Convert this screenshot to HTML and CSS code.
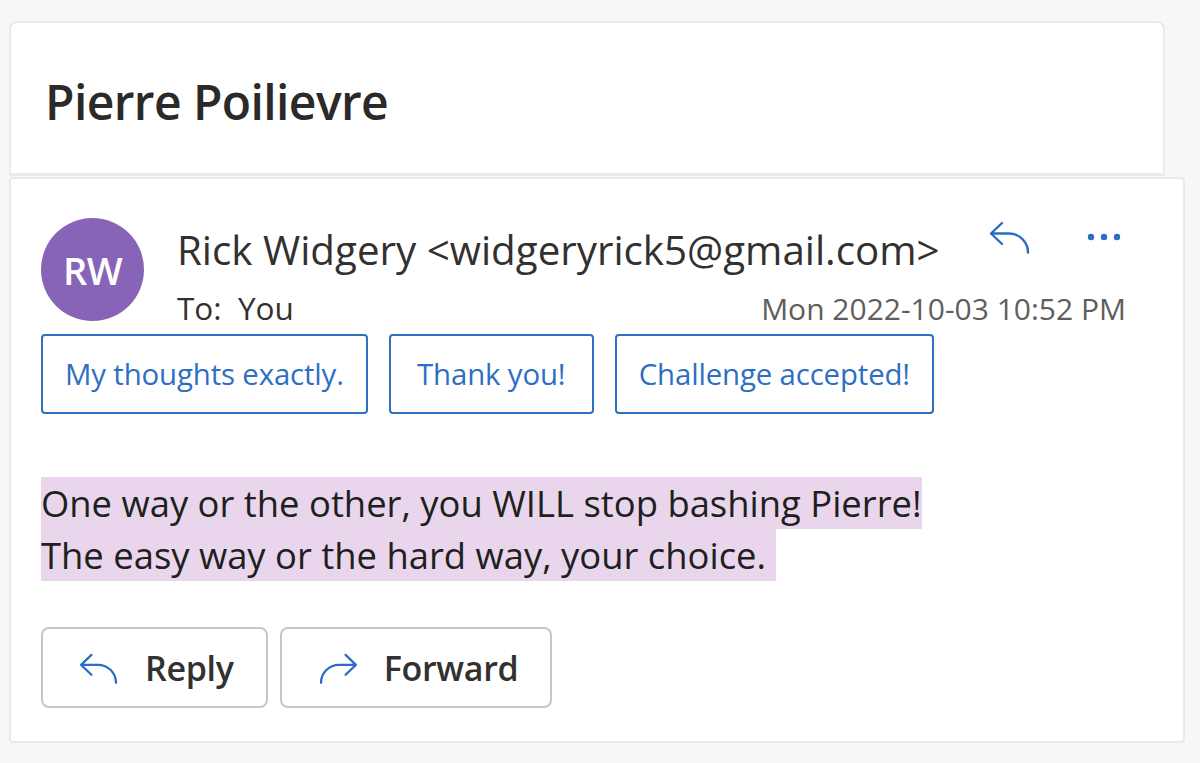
FILE: index.html
```html
<!DOCTYPE html>
<html lang="en">
<head>
<meta charset="utf-8">
<title>Pierre Poilievre</title>
<link rel="stylesheet" href="styles.css">
</head>
<body>
<div class="page">
  <div class="subject-card">
    <h1 class="subject">Pierre Poilievre</h1>
  </div>
  <div class="message-card">
    <div class="head">
      <div class="avatar">RW</div>
      <div class="from">Rick Widgery &lt;widgeryrick5@gmail.com&gt;</div>
      <div class="actions">
        <svg class="icon-reply" viewBox="0 0 42 36" width="42" height="36" aria-hidden="true">
          <path d="M13 2 L2 12.5 L13 23 M2 12.5 H20 A19 19 0 0 1 39 31.5" fill="none" stroke="currentColor" stroke-width="2.4" stroke-linecap="round" stroke-linejoin="round"/>
        </svg>
        <svg class="icon-more" viewBox="0 0 36 8" width="36" height="8" aria-hidden="true">
          <circle cx="4" cy="4" r="3.2" fill="currentColor"/>
          <circle cx="17" cy="4" r="3.2" fill="currentColor"/>
          <circle cx="30" cy="4" r="3.2" fill="currentColor"/>
        </svg>
      </div>
      <div class="to-row">
        <span class="to">To:&nbsp; You</span>
        <span class="date">Mon 2022-10-03 10:52 PM</span>
      </div>
    </div>
    <div class="quick">
      <button class="quick-btn">My thoughts exactly.</button>
      <button class="quick-btn">Thank you!</button>
      <button class="quick-btn">Challenge accepted!</button>
    </div>
    <div class="body">
      <span class="hl">One way or the other, you WILL stop bashing Pierre!<br>The easy way or the hard way, your choice.&nbsp;</span>
    </div>
    <div class="buttons">
      <button class="act-btn reply">
        <svg viewBox="0 0 42 36" width="40" height="34" aria-hidden="true">
          <path d="M13 2 L2 12.5 L13 23 M2 12.5 H20 A19 19 0 0 1 39 31.5" fill="none" stroke="currentColor" stroke-width="2.4" stroke-linecap="round" stroke-linejoin="round"/>
        </svg>
        <span>Reply</span>
      </button>
      <button class="act-btn forward">
        <svg viewBox="0 0 42 36" width="40" height="34" aria-hidden="true">
          <path d="M29 2 L40 12.5 L29 23 M40 12.5 H22 A19 19 0 0 0 3 31.5" fill="none" stroke="currentColor" stroke-width="2.4" stroke-linecap="round" stroke-linejoin="round"/>
        </svg>
        <span>Forward</span>
      </button>
    </div>
  </div>
</div>
</body>
</html>
```

FILE: styles.css
```css
* { box-sizing: border-box; }

html, body {
  margin: 0;
  padding: 0;
  background: #f8f7f5;
}

body {
  font-family: "Open Sans", "Noto Sans", "Liberation Sans", sans-serif;
  color: #323130;
  width: 1200px;
  height: 763px;
  overflow: hidden;
}

.page {
  padding: 21px 0 0 9px;
}

.subject-card {
  width: 1156px;
  height: 155px;
  background: #ffffff;
  border: 2px solid #eceae8;
  border-bottom-width: 3px;
  border-radius: 8px 8px 0 0;
  display: flex;
  align-items: center;
  padding: 6px 0 0 34px;
}

.subject {
  margin: 0;
  font-size: 48px;
  font-weight: 600;
  color: #2b2a29;
  letter-spacing: -0.6px;
}

.message-card {
  margin-top: 1px;
  width: 1176px;
  height: 566px;
  background: #ffffff;
  border: 2px solid #eceae8;
  border-radius: 4px;
  padding: 39px 0 0 30px;
}

.head {
  display: grid;
  grid-template-columns: 104px 1fr auto;
  grid-template-rows: 66px 50px;
  column-gap: 32px;
  width: 1085px;
}

.avatar {
  grid-row: 1 / 3;
  width: 103px;
  height: 103px;
  border-radius: 50%;
  background: #8764b8;
  color: #ffffff;
  font-size: 38px;
  font-weight: 600;
  display: flex;
  align-items: center;
  justify-content: center;
  letter-spacing: -0.5px;
}

.from {
  font-size: 40.3px;
  line-height: 64px;
  color: #323130;
  white-space: nowrap;
}

.actions {
  display: flex;
  align-items: flex-start;
  gap: 56px;
  color: #2b6cc4;
  padding-top: 3px;
}

.icon-more { margin-top: 12px; margin-right: 3px; }

.to-row {
  grid-column: 2 / 4;
  display: flex;
  justify-content: space-between;
  align-items: baseline;
}

.to {
  font-size: 31.5px;
  line-height: 48px;
  color: #323130;
}

.date {
  font-size: 30px;
  line-height: 44px;
  color: #605e5c;
}

.quick {
  display: flex;
  gap: 21px;
}

.quick-btn {
  height: 80px;
  padding: 0 22px;
  background: #ffffff;
  border: 2px solid #2f6fc2;
  border-radius: 4px;
  font-family: inherit;
  font-size: 29.4px;
  color: #2f6fc2;
  letter-spacing: -0.15px;
}

.quick-btn:nth-child(2) { min-width: 205px; }

.body {
  margin-top: 63px;
  font-size: 36.4px;
  line-height: 52px;
  color: #201f1e;
}

.hl {
  background: #e9d6ec;
  padding: 1px 0;
}

.buttons {
  display: flex;
  gap: 12px;
  margin-top: 46px;
}

.act-btn {
  height: 81px;
  display: flex;
  align-items: center;
  gap: 26px;
  background: #ffffff;
  border: 2px solid #c8c6c4;
  border-radius: 8px;
  font-family: inherit;
  font-size: 34px;
  font-weight: 600;
  color: #323130;
  padding: 0 32px 0 36px;
  letter-spacing: -0.3px;
}

.act-btn svg { color: #2b6cc4; margin-top: 4px; }
```
